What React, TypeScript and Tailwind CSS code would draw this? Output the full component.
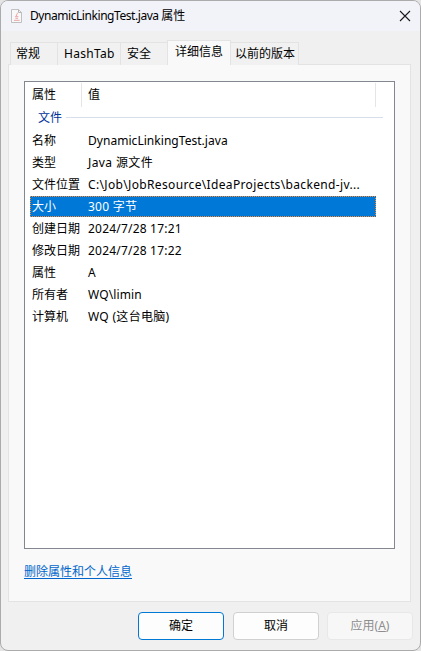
import React from "react";

type Row = { name: string; value: string; tracking: string; selected?: boolean };

const rows: Row[] = [
  { name: "名称", value: "DynamicLinkingTest.java", tracking: "tracking-[0.04px]" },
  { name: "类型", value: "Java 源文件", tracking: "tracking-[0.4px]" },
  { name: "文件位置", value: "C:\\Job\\JobResource\\IdeaProjects\\backend-jv...", tracking: "tracking-[0.35px]" },
  { name: "大小", value: "300 字节", tracking: "tracking-[0.25px]", selected: true },
  { name: "创建日期", value: "2024/7/28 17:21", tracking: "tracking-[0.2px]" },
  { name: "修改日期", value: "2024/7/28 17:22", tracking: "tracking-[0.2px]" },
  { name: "属性", value: "A", tracking: "tracking-normal" },
  { name: "所有者", value: "WQ\\limin", tracking: "tracking-[0.12px]" },
  { name: "计算机", value: "WQ (这台电脑)", tracking: "tracking-[0.3px]" },
];

const tabs = [
  { label: "常规", className: "h-[23px] w-[48px] pl-[5px]" },
  { label: "HashTab", className: "-ml-px h-[23px] w-[64px] pl-[6px] tracking-[0.3px]" },
  { label: "安全", className: "-ml-px h-[23px] w-[48px] pl-[6px]" },
  { label: "详细信息", className: "z-10 -ml-px h-[25px] w-[64px] pl-[7px] pb-[3px]", active: true },
  { label: "以前的版本", className: "-ml-px h-[23px] w-[69px] pl-[4px]" },
];

function FileIcon() {
  return (
    <svg width="12" height="14" viewBox="0 0 12 14" fill="none">
      <path d="M.5.5h7l3 3v10H.5z" fill="#f8f8f9" stroke="#c0c0c2" />
      <path d="M7.5 .5v3h3" stroke="#b4b4b6" />
      <path d="M6.3 3.8c.6 1.2-1.6 1.8-.7 3.4" stroke="#ec9c9c" />
      <path d="M4 7.7h3.4M4.4 9.3h2.6M3 11.3h5.6" stroke="#e8a4a6" />
    </svg>
  );
}

function Tabs() {
  return (
    <div className="ml-[9px] flex h-[25px] items-end">
      {tabs.map((t) => (
        <div
          key={t.label}
          className={`relative flex shrink-0 items-center whitespace-nowrap border border-b-0 border-[#e3e3e3] ${t.active ? "bg-[#f9f9f9]" : "bg-[#f1f1f1]"} ${t.className}`}
        >
          {t.label}
        </div>
      ))}
    </div>
  );
}

// One-pixel dotted edges of the focused row.
const dotsX = "h-px bg-[repeating-linear-gradient(90deg,#ff8728_0px,#ff8728_1px,#0078d7_1px,#0078d7_2px)]";
const dotsY = "w-px bg-[repeating-linear-gradient(180deg,#0078d7_0px,#0078d7_1px,#ff8728_1px,#ff8728_2px)]";

function PropertyList() {
  return (
    <div className="h-[468px] border border-[#828790] bg-white pl-[5px] pt-px">
      <div className="flex h-[25px] w-[346px] leading-[24px]">
        <div className="h-[24px] w-[52px] border-r border-[#e5e5e5] pl-[2px]">属性</div>
        <div className="h-[24px] flex-1 border-r border-[#e5e5e5] pl-[6px]">值</div>
      </div>
      <div className="flex h-[20px] w-[353px] items-center pl-[8px] text-[#003399]">
        <span>文件</span>
        <span className="mb-[2px] ml-[4px] h-px flex-1 bg-[#d7dfed]" />
      </div>
      <div className="pt-[2px]">
        {rows.map((r) => (
          <div key={r.name + r.value} className="h-[22px] w-[346px]">
            <div className={`h-[21px] ${r.selected ? "bg-[#0078d7] text-white" : ""}`}>
              <div className={r.selected ? dotsX : "h-px"} />
              <div className="flex h-[19px] whitespace-nowrap leading-[19px]">
                <span className={r.selected ? dotsY : "w-px"} />
                <span className="w-[57px] pl-px">{r.name}</span>
                <span className={`flex-1 ${r.tracking}`}>{r.value}</span>
                <span className={r.selected ? dotsY : "w-px"} />
              </div>
              <div className={r.selected ? dotsX : "h-px"} />
            </div>
          </div>
        ))}
      </div>
    </div>
  );
}

export default function App() {
  return (
    <div className="h-[651px] w-[421px] bg-[#e4e4e4]">
      <div className="flex h-full flex-col overflow-hidden rounded-[8px] border border-[#ababab] bg-[#f0f0f0] font-['Noto_Sans','Noto_Sans_CJK_SC',sans-serif] text-[12px] leading-[16px] text-black">
        <div className="flex h-[30px] items-center bg-[#f2f2f9] pl-[10px] pr-[9px]">
          <FileIcon />
          <span className="ml-[7px] flex-1">
            <span className="tracking-[-0.44px]">DynamicLinkingTest.java </span>属性
          </span>
          <svg width="12" height="12" viewBox="0 0 12 12" fill="none" stroke="#191919" strokeWidth="1.1">
            <path d="M1 1l10 10M11 1L1 11" />
          </svg>
        </div>
        <div className="mt-[9px]">
          <Tabs />
        </div>
        <div className="-mt-px ml-[7px] h-[538px] w-[403px] border border-[#e3e3e3] bg-[#f9f9f9] px-[15px] pt-[16px]">
          <PropertyList />
          <div className="mt-[15px] text-[#0066cc] underline underline-offset-2">删除属性和个人信息</div>
        </div>
        <div className="mt-[10px] flex justify-end gap-[8px] pr-[7px]">
          <button className="mr-px h-[28px] w-[86px] rounded-[4px] border border-[#0078d4] bg-[#fdfdfd]">确定</button>
          <button className="h-[28px] w-[86px] rounded-[4px] border border-[#d0d0d0] bg-[#fdfdfd]">取消</button>
          <button className="h-[28px] w-[86px] rounded-[4px] border border-[#e8e8e8] bg-[#f7f7f7] text-[#8e8e8e]">
            应用(<span className="underline">A</span>)
          </button>
        </div>
      </div>
    </div>
  );
}
